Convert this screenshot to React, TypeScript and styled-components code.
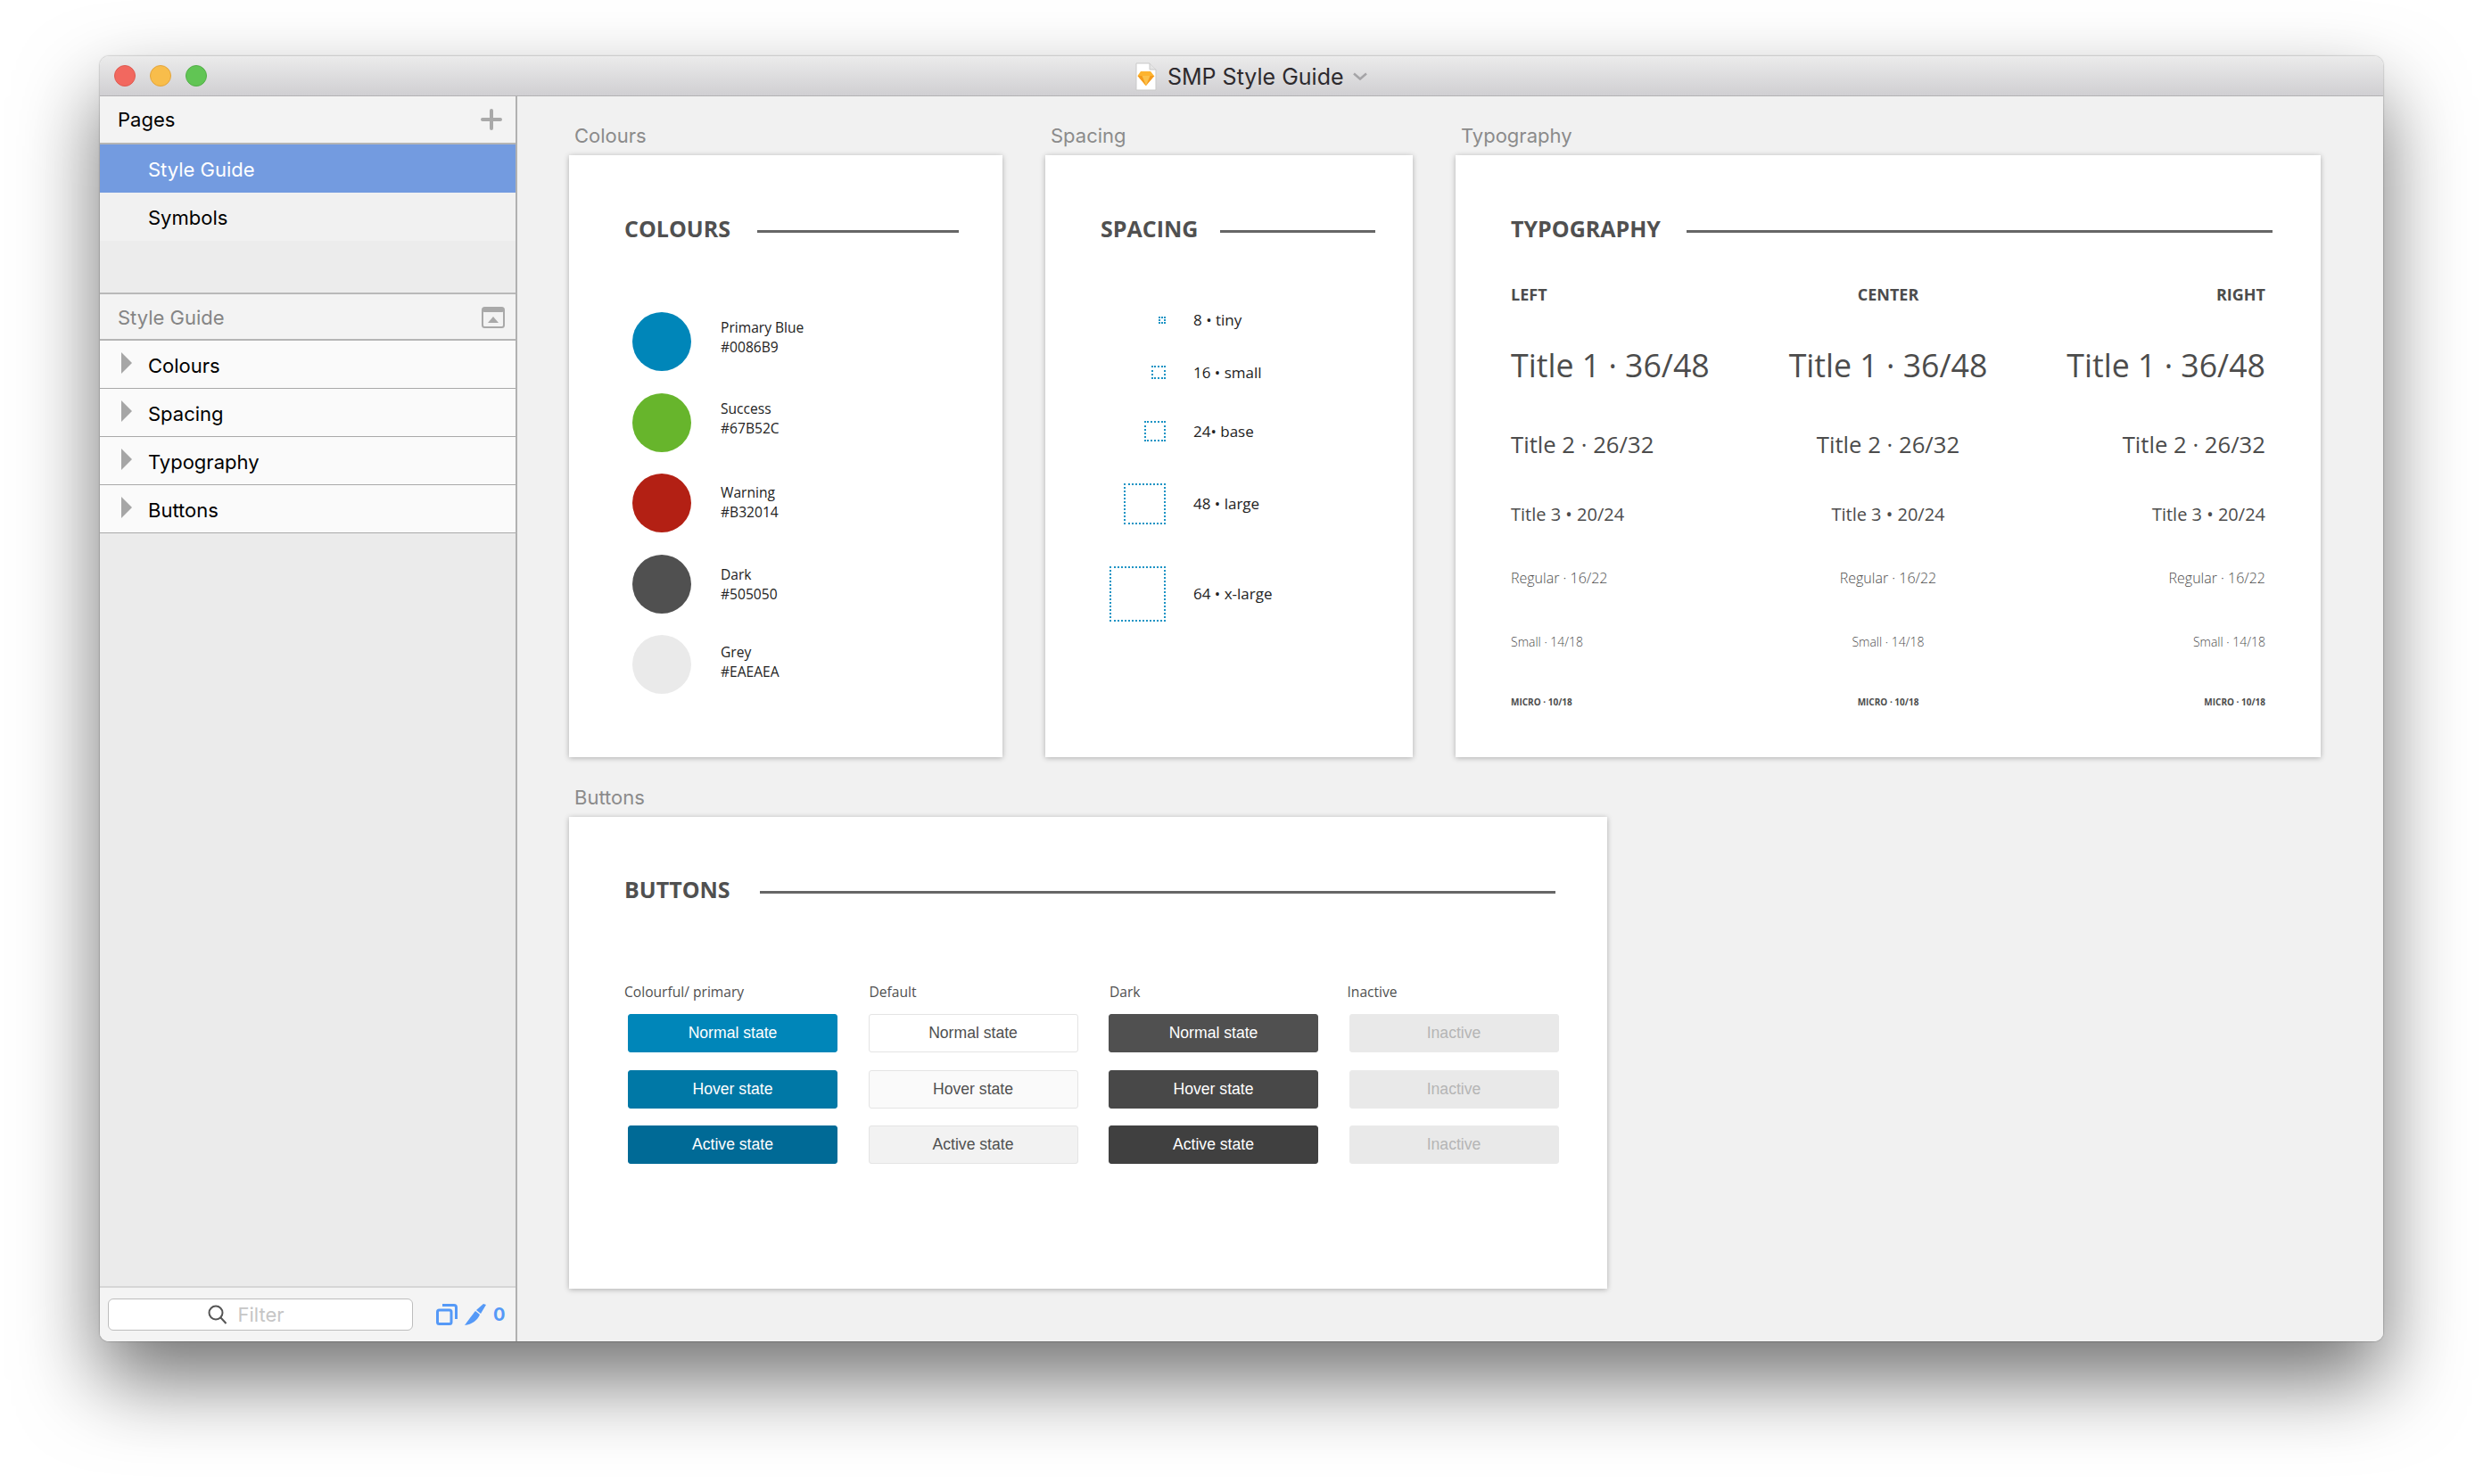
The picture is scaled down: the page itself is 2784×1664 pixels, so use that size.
import React from "react";
import styled, { createGlobalStyle } from "styled-components";

const GlobalStyle = createGlobalStyle`
  html, body { margin: 0; padding: 0; background: #ffffff; }
  body { width: 2784px; height: 1664px; overflow: hidden; font-family: "Inter", "Liberation Sans", sans-serif; }
  * { box-sizing: border-box; }
`;

const Desktop = styled.div`
  width: 2784px;
  height: 1664px;
  padding: 63px 0 0 112px;
`;

const WindowShadow = styled.div`
  width: 2560px;
  height: 1441px;
  border-radius: 10px;
  box-shadow: 0 0 2px rgba(0, 0, 0, 0.45), 0 44px 90px rgba(0, 0, 0, 0.55);
`;

const Window = styled.div`
  width: 2560px;
  height: 1441px;
  display: flex;
  flex-direction: column;
  border-radius: 10px;
  overflow: hidden;
  background: #f1f1f1;
`;

const TitleBar = styled.div`
  height: 45px;
  flex: none;
  display: flex;
  align-items: center;
  padding-left: 16px;
  background: linear-gradient(#ebebeb, #d0cfd2);
  border-bottom: 1px solid #b2b1b3;
`;

const Lights = styled.div`
  display: flex;
  gap: 16px;
`;

const Light = styled.span<{ $fill: string; $edge: string }>`
  width: 24px;
  height: 24px;
  border-radius: 50%;
  background: ${(p) => p.$fill};
  border: 1px solid ${(p) => p.$edge};
`;

const TitleGroup = styled.div`
  margin-left: 1041px;
  padding-top: 2px;
  display: flex;
  align-items: center;
`;

const TitleText = styled.span`
  margin-left: 12px;
  font-size: 25px;
  color: #2d2a2e;
`;

const Body = styled.div`
  flex: 1;
  display: flex;
  min-height: 0;
`;

const Sidebar = styled.aside`
  width: 468px;
  flex: none;
  display: flex;
  flex-direction: column;
  background: #ebebeb;
  border-right: 2px solid #b1b1b1;
  font-size: 22px;
  color: #000;
`;

const PagesHeader = styled.div`
  height: 54px;
  display: flex;
  align-items: center;
  justify-content: space-between;
  padding: 0 15px 0 20px;
  background: #f3f3f3;
  border-bottom: 2px solid #b5b5b5;
`;

const PageRow = styled.div<{ $active?: boolean }>`
  height: 54px;
  display: flex;
  align-items: center;
  padding: 2px 0 0 54px;
  background: ${(p) => (p.$active ? "#739be0" : "#f1f1f1")};
  color: ${(p) => (p.$active ? "#fff" : "#000")};
`;

const PagesSpacer = styled.div`
  height: 60px;
  background: #ececec;
  border-bottom: 2px solid #b9b9b9;
`;

const LayersHeader = styled.div`
  height: 52px;
  display: flex;
  align-items: center;
  justify-content: space-between;
  padding: 2px 12px 0 20px;
  background: #f3f3f3;
  border-bottom: 2px solid #b5b5b5;
  color: #858585;
`;

const LayerRow = styled.div`
  height: 54px;
  display: flex;
  align-items: center;
  padding-top: 2px;
  background: #fafafa;
  border-bottom: 1px solid #a9a9a9;
`;

const Disclosure = styled.span`
  width: 0;
  height: 0;
  margin: -5px 18px 0 24px;
  border-style: solid;
  border-width: 12px 0 12px 12px;
  border-color: transparent transparent transparent #a6a6a6;
`;

const SidebarFill = styled.div`
  flex: 1;
`;

const FilterBar = styled.div`
  height: 62px;
  flex: none;
  display: flex;
  align-items: center;
  padding: 0 0 0 9px;
  background: #f4f4f4;
  border-top: 2px solid #d6d6d6;
`;

const FilterInput = styled.div`
  width: 342px;
  height: 36px;
  display: flex;
  align-items: center;
  justify-content: center;
  gap: 11px;
  padding-right: 32px;
  background: #fff;
  border: 1px solid #bdbdbd;
  border-radius: 6px;
  color: #c6c6c6;
`;

const FilterTools = styled.div`
  margin-left: 26px;
  display: flex;
  align-items: center;
  gap: 8px;
  color: #5599f7;
  font-weight: 700;
  font-size: 20px;
`;

const Main = styled.main`
  flex: 1;
  padding: 31px 0 0 58px;
  background: #f1f1f1;
  display: flex;
  flex-direction: column;
  gap: 32px;
`;

const ArtboardRow = styled.div`
  display: flex;
  gap: 48px;
`;

const Artboard = styled.section``;

const ArtboardName = styled.div`
  height: 26px;
  margin: 0 0 9px 6px;
  line-height: 26px;
  font-size: 22px;
  color: #8b8b8b;
`;

const Card = styled.div<{ $w: number; $h: number; $right: number; $top?: number }>`
  width: ${(p) => p.$w}px;
  height: ${(p) => p.$h}px;
  padding: ${(p) => p.$top ?? 64}px ${(p) => p.$right}px 0 62px;
  background: #fff;
  box-shadow: 0 1px 6px rgba(0, 0, 0, 0.28);
  font-family: "Open Sans", "Liberation Sans", sans-serif;
  color: #505050;
`;

const Heading = styled.div<{ $gap: number }>`
  height: 36px;
  display: flex;
  align-items: center;
  gap: ${(p) => p.$gap}px;
`;

const HeadingText = styled.h2`
  margin: 0;
  font-size: 25px;
  font-weight: 700;
  line-height: 36px;
  color: #505050;
`;

const HeadingRule = styled.span`
  flex: 1;
  height: 3px;
  margin-top: 7px;
  background: #666;
`;

const SwatchList = styled.div`
  margin: 76px 0 0 9px;
  display: flex;
  flex-direction: column;
  gap: 24.6px;
`;

const SwatchRow = styled.div`
  height: 66px;
  display: flex;
  align-items: center;
  gap: 33px;
`;

const Swatch = styled.span<{ $color: string }>`
  width: 66px;
  height: 66px;
  border-radius: 50%;
  background: ${(p) => p.$color};
`;

const SwatchText = styled.div<{ $lift: number }>`
  margin-top: ${(p) => -p.$lift}px;
  font-size: 15.6px;
  line-height: 22px;
  color: #222;
`;

const SpacingList = styled.div`
  margin-top: 81px;
  display: flex;
  flex-direction: column;
  gap: 47px;
`;

const SpacingRow = styled.div`
  display: flex;
  align-items: center;
  gap: 31px;
`;

const SpacingBoxSlot = styled.div`
  width: 73px;
  display: flex;
  justify-content: flex-end;
`;

const SpacingBox = styled.span<{ $w: number; $h: number }>`
  width: ${(p) => p.$w}px;
  height: ${(p) => p.$h}px;
  border: 2px dotted #1b93c4;
`;

const SpacingText = styled.span`
  font-size: 17px;
  line-height: 8px;
  color: #222;
`;

const TypeGrid = styled.div`
  margin: 18px 8px 0 0;
  display: grid;
  grid-template-columns: repeat(3, 1fr);
  grid-template-rows: 78px 78px 102px 54px 90px 52px 81px;
  align-items: center;
`;

const TypeCell = styled.div<{ $align: string; $size: number; $weight: number }>`
  text-align: ${(p) => p.$align};
  font-size: ${(p) => p.$size}px;
  font-weight: ${(p) => p.$weight};
  line-height: 1.2;
  white-space: nowrap;
  color: #4c4c4c;
`;

const ButtonGrid = styled.div<{ $top: number }>`
  margin: ${(p) => p.$top}px 0 0 4px;
  display: grid;
  grid-template-columns: repeat(4, 235px);
  column-gap: 34.5px;
`;

const ButtonColumn = styled.div`
  display: flex;
  flex-direction: column;
  gap: 19.5px;
`;

const ButtonLabel = styled.div<{ $shift: number }>`
  height: 20px;
  margin: 0 0 -4px ${(p) => p.$shift}px;
  line-height: 20px;
  font-size: 15.6px;
  color: #505050;
`;

const StateButton = styled.div<{ $bg: string; $fg: string; $edge: string }>`
  height: 43px;
  display: flex;
  align-items: center;
  justify-content: center;
  background: ${(p) => p.$bg};
  color: ${(p) => p.$fg};
  border: 1px solid ${(p) => p.$edge};
  border-radius: 3px;
  font-family: "Liberation Sans", Arial, sans-serif;
  font-size: 17.6px;
`;

const swatches = [
  { name: "Primary Blue", code: "#0086B9", color: "#0086b9", lift: 10 },
  { name: "Success", code: "#67B52C", color: "#67b52c", lift: 10 },
  { name: "Warning", code: "#B32014", color: "#b32014", lift: 3 },
  { name: "Dark", code: "#505050", color: "#505050", lift: 0 },
  { name: "Grey", code: "#EAEAEA", color: "#eaeaea", lift: 6 },
];

const spacings = [
  { w: 8, h: 8, label: "8 • tiny" },
  { w: 16, h: 15, label: "16 • small" },
  { w: 24, h: 23, label: "24• base" },
  { w: 47, h: 46, label: "48 • large" },
  { w: 63, h: 62, label: "64 • x-large" },
];

const typeRows = [
  { size: 18, weight: 700, text: "" },
  { size: 35.7, weight: 400, text: "Title 1 · 36/48" },
  { size: 25.7, weight: 400, text: "Title 2 · 26/32" },
  { size: 20, weight: 400, text: "Title 3 • 20/24" },
  { size: 16, weight: 300, text: "Regular · 16/22" },
  { size: 14, weight: 300, text: "Small · 14/18" },
  { size: 10, weight: 700, text: "MICRO ·  10/18" },
];

const typeColumns = [
  { align: "left", title: "LEFT" },
  { align: "center", title: "CENTER" },
  { align: "right", title: "RIGHT" },
];

const buttonColumns = [
  {
    label: "Colourful/ primary",
    shift: -4,
    items: [
      { text: "Normal state", bg: "#0086b9", fg: "#fff", edge: "#0086b9" },
      { text: "Hover state", bg: "#0078a6", fg: "#fff", edge: "#0078a6" },
      { text: "Active state", bg: "#006a96", fg: "#fff", edge: "#006a96" },
    ],
  },
  {
    label: "Default",
    shift: 1,
    items: [
      { text: "Normal state", bg: "#fff", fg: "#505050", edge: "#e4e4e4" },
      { text: "Hover state", bg: "#fafafa", fg: "#505050", edge: "#e4e4e4" },
      { text: "Active state", bg: "#f2f2f2", fg: "#505050", edge: "#e4e4e4" },
    ],
  },
  {
    label: "Dark",
    shift: 1,
    items: [
      { text: "Normal state", bg: "#505050", fg: "#fff", edge: "#505050" },
      { text: "Hover state", bg: "#484848", fg: "#fff", edge: "#484848" },
      { text: "Active state", bg: "#404040", fg: "#fff", edge: "#404040" },
    ],
  },
  {
    label: "Inactive",
    shift: -2,
    items: [
      { text: "Inactive", bg: "#e9e9e9", fg: "#b5b5b5", edge: "#e9e9e9" },
      { text: "Inactive", bg: "#e9e9e9", fg: "#b5b5b5", edge: "#e9e9e9" },
      { text: "Inactive", bg: "#e9e9e9", fg: "#b5b5b5", edge: "#e9e9e9" },
    ],
  },
];

const DocIcon = () => (
  <svg width="24" height="32" viewBox="0 0 24 32">
    <path d="M1 1h15l7 7v23H1z" fill="#fff" stroke="#c9c9c9" />
    <path d="M16 1v7h7" fill="#e4e4e4" stroke="#c9c9c9" />
    <path d="M6 10h11l4 5-9.5 11L2.500 15z" fill="#fdb32f" />
    <path d="M2.500 15h19L12 26z" fill="#f59a1b" />
    <path d="M7.500 15h9L12 26z" fill="#fbc14c" />
  </svg>
);

const Chevron = () => (
  <svg width="16" height="10" viewBox="0 0 16 10" style={{ marginLeft: 10 }}>
    <path d="M1 1.500l7 6 7-6" fill="none" stroke="#a5a4a7" strokeWidth="2.500" />
  </svg>
);

const PlusIcon = () => (
  <svg width="24" height="24" viewBox="0 0 24 24">
    <path d="M12 2v20M2 12h20" stroke="#a9a9a9" strokeWidth="4" strokeLinecap="round" />
  </svg>
);

const CollapseIcon = () => (
  <svg width="26" height="24" viewBox="0 0 26 24">
    <rect x="1" y="1" width="24" height="22" rx="2.500" fill="none" stroke="#a9a9a9" strokeWidth="2" />
    <rect x="1" y="1" width="24" height="5" rx="2" fill="#a9a9a9" />
    <path d="M13 11l6 7H7z" fill="#a9a9a9" />
  </svg>
);

const SearchIcon = () => (
  <svg width="22" height="22" viewBox="0 0 22 22">
    <circle cx="9" cy="9" r="7.500" fill="none" stroke="#555" strokeWidth="2" />
    <path d="M14.500 14.500l6 6.500" stroke="#555" strokeWidth="2" />
  </svg>
);

const CopyIcon = () => (
  <svg width="24" height="24" viewBox="0 0 24 24">
    <rect x="1.500" y="7" width="15.500" height="15.500" rx="2" fill="none" stroke="#5599f7" strokeWidth="3" />
    <path d="M7 1.500h13a2.500 2.500 0 0 1 2.500 2.500v13" fill="none" stroke="#5599f7" strokeWidth="3" />
  </svg>
);

const NibIcon = () => (
  <svg width="24" height="24" viewBox="0 0 24 24">
    <path d="M0 24C5 17 8 13 12 8l5 4C14 19 8 23 0 24z" fill="#5599f7" />
    <path d="M13 7l8-7 3 1-6 10z" fill="#5599f7" />
  </svg>
);

const App = () => (
  <Desktop>
    <GlobalStyle />
    <WindowShadow>
      <Window>
        <TitleBar>
          <Lights>
            <Light $fill="#f2685f" $edge="#de5a50" />
            <Light $fill="#f8bd4b" $edge="#e3a43c" />
            <Light $fill="#61c554" $edge="#52ae47" />
          </Lights>
          <TitleGroup>
            <DocIcon />
            <TitleText>SMP Style Guide</TitleText>
            <Chevron />
          </TitleGroup>
        </TitleBar>
        <Body>
          <Sidebar>
            <PagesHeader>
              Pages
              <PlusIcon />
            </PagesHeader>
            <PageRow $active>Style Guide</PageRow>
            <PageRow>Symbols</PageRow>
            <PagesSpacer />
            <LayersHeader>
              Style Guide
              <CollapseIcon />
            </LayersHeader>
            {["Colours", "Spacing", "Typography", "Buttons"].map((name) => (
              <LayerRow key={name}>
                <Disclosure />
                {name}
              </LayerRow>
            ))}
            <SidebarFill />
            <FilterBar>
              <FilterInput>
                <SearchIcon />
                Filter
              </FilterInput>
              <FilterTools>
                <CopyIcon />
                <NibIcon />
                0
              </FilterTools>
            </FilterBar>
          </Sidebar>
          <Main>
            <ArtboardRow>
              <Artboard>
                <ArtboardName>Colours</ArtboardName>
                <Card $w={486} $h={675} $right={49}>
                  <Heading $gap={30}>
                    <HeadingText>COLOURS</HeadingText>
                    <HeadingRule />
                  </Heading>
                  <SwatchList>
                    {swatches.map((s) => (
                      <SwatchRow key={s.name}>
                        <Swatch $color={s.color} />
                        <SwatchText $lift={s.lift}>
                          {s.name}
                          <br />
                          {s.code}
                        </SwatchText>
                      </SwatchRow>
                    ))}
                  </SwatchList>
                </Card>
              </Artboard>
              <Artboard>
                <ArtboardName>Spacing</ArtboardName>
                <Card $w={412} $h={675} $right={42}>
                  <Heading $gap={25}>
                    <HeadingText>SPACING</HeadingText>
                    <HeadingRule />
                  </Heading>
                  <SpacingList>
                    {spacings.map((s) => (
                      <SpacingRow key={s.w}>
                        <SpacingBoxSlot>
                          <SpacingBox $w={s.w} $h={s.h} />
                        </SpacingBoxSlot>
                        <SpacingText>{s.label}</SpacingText>
                      </SpacingRow>
                    ))}
                  </SpacingList>
                </Card>
              </Artboard>
              <Artboard>
                <ArtboardName>Typography</ArtboardName>
                <Card $w={970} $h={675} $right={54}>
                  <Heading $gap={29}>
                    <HeadingText>TYPOGRAPHY</HeadingText>
                    <HeadingRule />
                  </Heading>
                  <TypeGrid>
                    {typeRows.map((row, i) =>
                      typeColumns.map((col) => (
                        <TypeCell key={col.align + i} $align={col.align} $size={row.size} $weight={row.weight}>
                          {i === 0 ? col.title : row.text}
                        </TypeCell>
                      ))
                    )}
                  </TypeGrid>
                </Card>
              </Artboard>
            </ArtboardRow>
            <Artboard>
              <ArtboardName>Buttons</ArtboardName>
              <Card $w={1164} $h={529} $right={58} $top={63}>
                <Heading $gap={33}>
                  <HeadingText>BUTTONS</HeadingText>
                  <HeadingRule />
                </Heading>
                <ButtonGrid $top={86.5}>
                  {buttonColumns.map((col) => (
                    <ButtonColumn key={col.label}>
                      <ButtonLabel $shift={col.shift}>{col.label}</ButtonLabel>
                      {col.items.map((b, i) => (
                        <StateButton key={i} $bg={b.bg} $fg={b.fg} $edge={b.edge}>
                          {b.text}
                        </StateButton>
                      ))}
                    </ButtonColumn>
                  ))}
                </ButtonGrid>
              </Card>
            </Artboard>
          </Main>
        </Body>
      </Window>
    </WindowShadow>
  </Desktop>
);

export default App;
